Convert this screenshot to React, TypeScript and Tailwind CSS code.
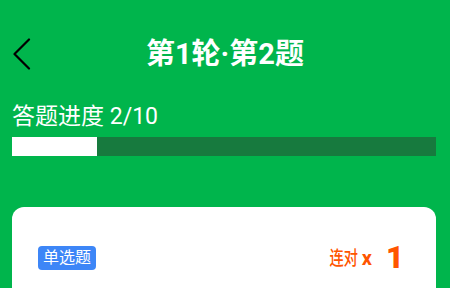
const font = { fontFamily: 'Roboto, "Noto Sans CJK SC", sans-serif' };

function BackIcon() {
  return (
    <svg width="20" height="32" viewBox="0 0 20 32" fill="none">
      <path d="M17 1.5 L2.5 16 L17 30.5" stroke="#000" strokeWidth="2.2" strokeLinecap="round" strokeLinejoin="round" />
    </svg>
  );
}

export default function App() {
  const current = 2;
  const total = 10;
  return (
    <div className="h-[288px] w-[450px] overflow-hidden bg-[#00b54c]" style={font}>
      <div className="mt-[31px] grid h-[44px] grid-cols-[60px_1fr_60px] items-center">
        <div className="flex items-center pl-[12px] pt-[2px]">
          <BackIcon />
        </div>
        <h1 className="pt-[2px] text-center text-[29px] font-bold leading-none text-white">第1轮·第2题</h1>
        <div />
      </div>

      <div className="pl-[12px] pr-[14px]">
        <p className="mt-[30px] text-[23px] leading-[24px] text-white">答题进度 {current}/{total}</p>
        <div className="mt-[8px] h-[19px] w-full bg-[#177a3e]">
          <div className="h-full bg-white" style={{ width: `${(current / total) * 100}%` }} />
        </div>

        <div className="mt-[51px] h-[120px] rounded-[12px] bg-white pl-[26px] pr-[32px] pt-[35px]">
          <div className="flex items-center justify-between">
            <span className="rounded-[4px] bg-[#3d86f7] px-[5px] text-[16px] leading-[24px] text-white">单选题</span>
            <div className="flex items-center text-[#ff5500]">
              <span className="inline-block origin-right scale-x-[0.75] pt-[2px] text-[19px] font-medium leading-none">连对</span>
              <span className="ml-[4px] text-[20px] font-bold leading-none">x</span>
              <span className="ml-[14px] text-[31px] font-black leading-none">1</span>
            </div>
          </div>
        </div>
      </div>
    </div>
  );
}
